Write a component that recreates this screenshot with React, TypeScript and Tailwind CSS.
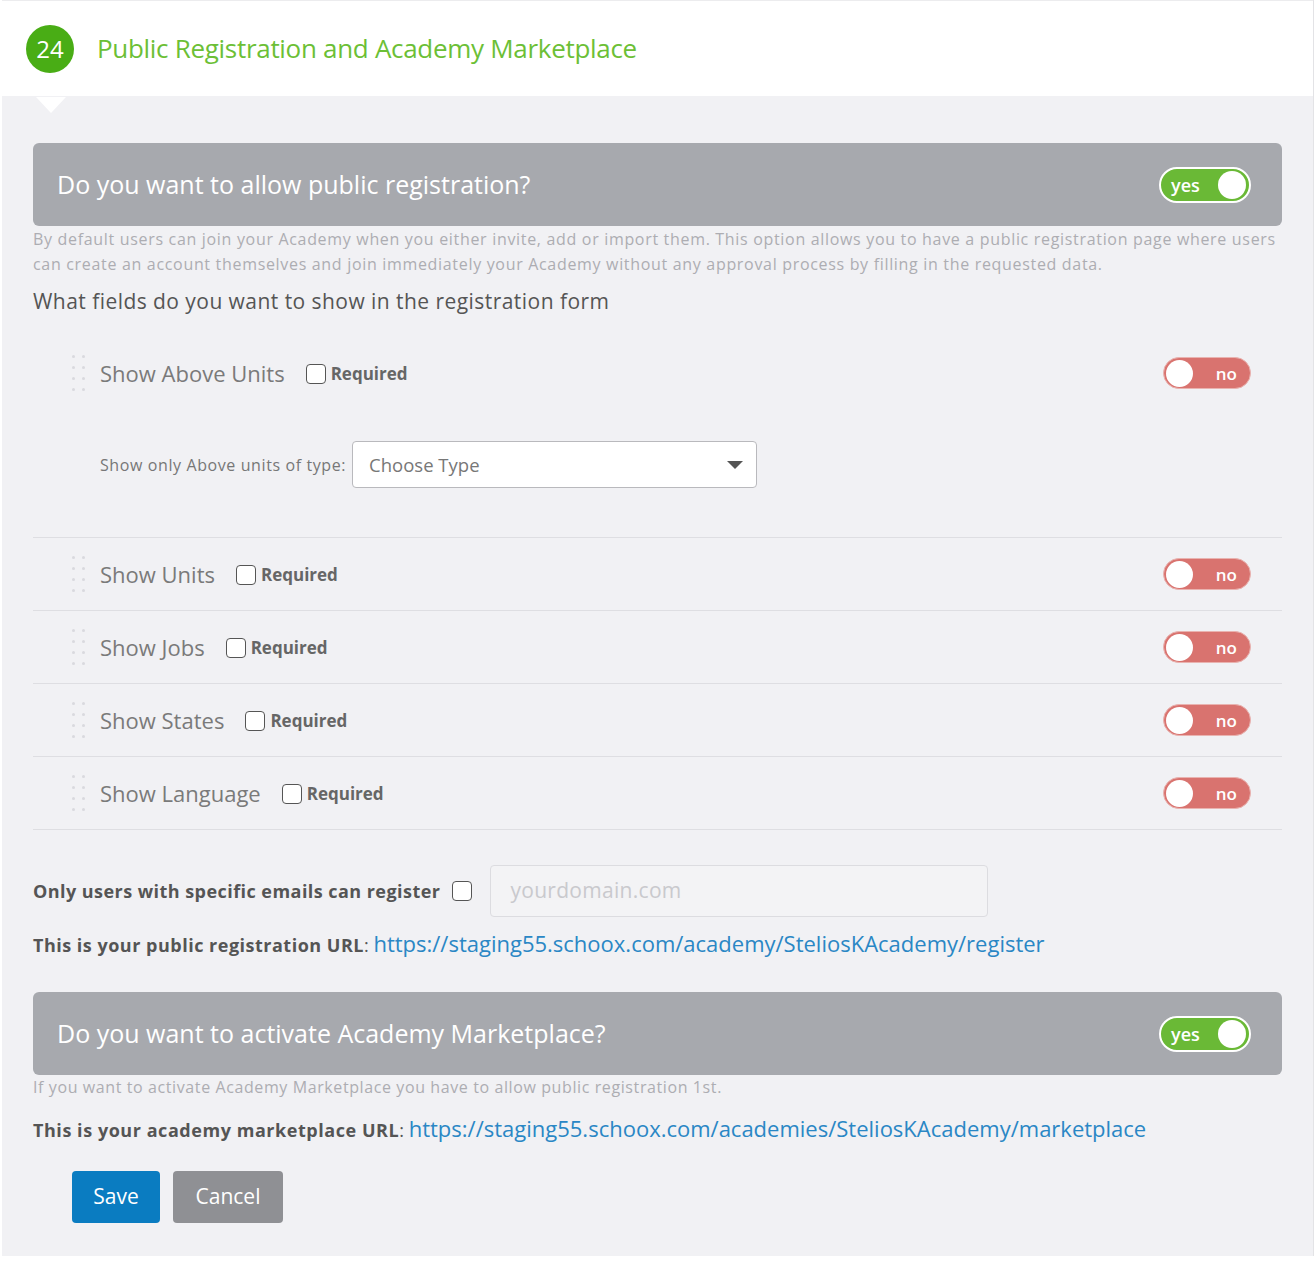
import React from 'react'

const font = { fontFamily: '"Open Sans", "Noto Sans", sans-serif' }

const Toggle = ({ on }: { on: boolean }) =>
  on ? (
    <div className="flex h-[36px] w-[92px] items-center justify-between rounded-full border-2 border-white bg-[#6ab936] pl-[10px] pr-[3px]">
      <span className="text-[18px] font-semibold leading-none text-white">yes</span>
      <span className="h-[28px] w-[28px] rounded-full bg-white" />
    </div>
  ) : (
    <div className="flex h-[32px] w-[88px] items-center justify-between rounded-full border border-[#e9b3b0] bg-[#d9736f] pl-[2px] pr-[13px]">
      <span className="h-[27px] w-[27px] rounded-full bg-white" />
      <span className="text-[17px] font-semibold leading-none text-white">no</span>
    </div>
  )

const Checkbox = () => (
  <span className="inline-block h-[20px] w-[20px] rounded-[4px] border-[1.5px] border-[#555] bg-white" />
)

const DragHandle = () => (
  <div className="grid w-[13px] grid-cols-2 gap-x-[7px] gap-y-[8px]">
    {Array.from({ length: 8 }).map((_, i) => (
      <span key={i} className="h-[3px] w-[3px] rounded-full bg-[#d9d9de]" />
    ))}
  </div>
)

const FieldRow = ({ label, children }: { label: string; children?: React.ReactNode }) => (
  <div className="border-b border-[#dedee2]">
    <div className="flex h-[72px] items-center pl-[39px] pr-[31px]">
      <DragHandle />
      <span className="ml-[15px] text-[22px] text-[#7a7a7a]">{label}</span>
      <span className="ml-[21px] mt-[2px] flex items-center gap-[5px]">
        <Checkbox />
        <span className="text-[17px] font-bold text-[#666]">Required</span>
      </span>
      <div className="ml-auto">
        <Toggle on={false} />
      </div>
    </div>
    {children}
  </div>
)

const SectionBar = ({ title }: { title: string }) => (
  <div className="flex h-[83px] items-center justify-between rounded-[6px] bg-[#a7a9ae] pl-[24px] pr-[31px]">
    <span className="text-[25px] text-white">{title}</span>
    <Toggle on />
  </div>
)

export default function App() {
  return (
    <div className="min-h-[1264px] w-[1316px] bg-white" style={font}>
      <div className="mx-[2px] border-r border-[#e3e3e6]">
        <div className="relative flex h-[96px] items-center border-t border-[#ececee] bg-white pl-[24px]">
          <span className="flex h-[48px] w-[48px] items-center justify-center rounded-full bg-[#49ad15] text-[24px] text-white">
            24
          </span>
          <span className="ml-[23px] text-[26px] tracking-[-0.3px] text-[#6cbf36]">
            Public Registration and Academy Marketplace
          </span>
          <span className="absolute left-[34px] top-[96px] h-0 w-0 border-x-[15px] border-t-[16px] border-x-transparent border-t-white" />
        </div>

        <div className="bg-[#f1f1f4] px-[31px] pb-[33px] pt-[47px]">
          <SectionBar title="Do you want to allow public registration?" />
          <p className="mt-[1px] text-[16px] leading-[25px] tracking-[0.68px] text-[#adadb2]">
            By default users can join your Academy when you either invite, add or import them. This option allows you to have a public registration page where users can create an account themselves and join immediately your Academy without any approval process by filling in the requested data.
          </p>
          <p className="mt-[10px] text-[21px] leading-[28px] tracking-[0.45px] text-[#555]">
            What fields do you want to show in the registration form
          </p>

          <div className="mt-[22px]">
            <FieldRow label="Show Above Units">
              <div className="flex items-center pb-[49px] pl-[67px] pt-[32px]">
                <span className="text-[16px] tracking-[0.6px] text-[#777]">Show only Above units of type:</span>
                <div className="ml-[6px] flex h-[47px] w-[405px] items-center justify-between rounded-[4px] border border-[#b9b9bd] bg-white pl-[16px] pr-[13px]">
                  <span className="text-[18.5px] text-[#777]">Choose Type</span>
                  <span className="h-0 w-0 border-x-[8px] border-t-[8px] border-x-transparent border-t-[#555]" />
                </div>
              </div>
            </FieldRow>
            <FieldRow label="Show Units" />
            <FieldRow label="Show Jobs" />
            <FieldRow label="Show States" />
            <FieldRow label="Show Language" />
          </div>

          <div className="mt-[35px] flex items-center">
            <span className="text-[18px] font-bold tracking-[0.45px] text-[#555]">Only users with specific emails can register</span>
            <span className="ml-[12px] flex">
              <Checkbox />
            </span>
            <div className="ml-[18px] flex h-[52px] w-[498px] items-center rounded-[4px] border border-[#dcdce0] bg-[#f3f3f5] pl-[19px]">
              <span className="text-[21px] tracking-[0.3px] text-[#c9c9cd]">yourdomain.com</span>
            </div>
          </div>
          <p className="mt-[11px] leading-[30px]">
            <span className="text-[18px] font-bold tracking-[0.5px] text-[#555]">This is your public registration URL</span>
            <span className="text-[18px] text-[#555]">: </span>
            <a className="text-[22px] text-[#2a87c5]">https://staging55.schoox.com/academy/SteliosKAcademy/register</a>
          </p>

          <div className="mt-[31px]">
            <SectionBar title="Do you want to activate Academy Marketplace?" />
          </div>
          <p className="text-[16px] leading-[25px] tracking-[0.6px] text-[#adadb2]">
            If you want to activate Academy Marketplace you have to allow public registration 1st.
          </p>
          <p className="mt-[13px] leading-[30px]">
            <span className="text-[18px] font-bold tracking-[0.55px] text-[#555]">This is your academy marketplace URL</span>
            <span className="text-[18px] text-[#555]">: </span>
            <a className="text-[22px] text-[#2a87c5]">https://staging55.schoox.com/academies/SteliosKAcademy/marketplace</a>
          </p>

          <div className="mt-[25px] flex gap-[13px] pl-[39px]">
            <button className="h-[52px] w-[88px] rounded-[4px] bg-[#0a7cc1] text-[21px] text-white">Save</button>
            <button className="h-[52px] w-[110px] rounded-[4px] bg-[#8f9094] text-[21px] text-white">Cancel</button>
          </div>
        </div>
      </div>
    </div>
  )
}
